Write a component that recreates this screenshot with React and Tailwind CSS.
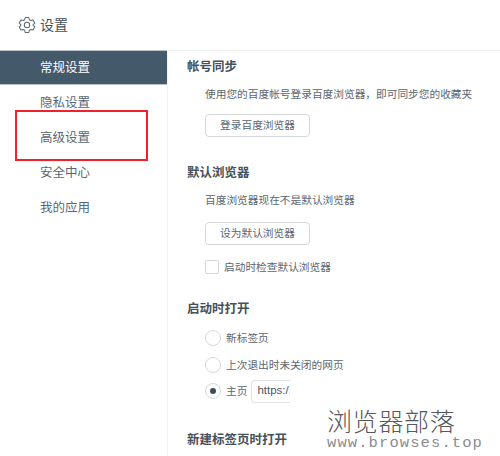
import React from "react";

const cjk = "font-['Liberation_Sans','Noto_Sans_CJK_SC',sans-serif]";

function GearIcon() {
  return (
    <svg width="18" height="18" viewBox="0 0 24 24" fill="none" stroke="#5f6b75" strokeWidth="1.4" strokeLinejoin="round">
      <path d="M9.6 2h4.8l.7 3 1.9 1.1 3-.9 2.4 4.2-2.2 2.1v1l2.2 2.1-2.4 4.2-3-.9-1.9 1.1-.7 3H9.6l-.7-3-1.9-1.1-3 .9-2.4-4.2L3.8 12.5v-1L1.6 9.4 4 5.2l3 .9L8.9 5z" />
      <circle cx="12" cy="12" r="3.6" />
    </svg>
  );
}

function SideItem({ label, active }) {
  return (
    <div
      className={
        active
          ? "h-[35px] pl-10 pt-[2px] flex items-center text-[12.5px] bg-[#44596a] text-white border-y border-[#b9c2c9]"
          : "h-[35px] pl-10 pt-[2px] flex items-center text-[12.5px] text-[#5b6670]"
      }
    >
      {label}
    </div>
  );
}

function Heading({ children, className }) {
  return <h2 className={"h-4 leading-4 text-[12.5px] font-bold text-[#46515c] " + className}>{children}</h2>;
}

function OutlineButton({ children, className }) {
  return (
    <div className={"ml-[18px] w-[105px] h-[23px] flex items-center justify-center text-[10.7px] text-[#5b6670] border border-[#d5d8da] rounded " + className}>
      {children}
    </div>
  );
}

function Radio({ checked, label, className, children }) {
  return (
    <div className={"ml-[18px] h-4 flex items-center " + className}>
      <span className="w-4 h-4 rounded-full border border-[#d5d8da] flex items-center justify-center">
        {checked && <span className="w-[6px] h-[6px] rounded-full bg-[#3d4c5a]"></span>}
      </span>
      <span className="ml-[5px] text-[10.7px] text-[#5b6670]">{label}</span>
      {children}
    </div>
  );
}

export default function App() {
  return (
    <div className={"relative w-[500px] h-[456px] overflow-hidden bg-white " + cjk}>
      <div className="h-[50px] pl-[18px] flex items-center">
        <GearIcon />
        <span className="ml-[4px] text-sm text-[#46515c]">设置</span>
      </div>
      <div className="flex h-[406px]">
        <div className="w-[168px] shrink-0 border-r border-[#f1f2f3]">
          <SideItem label="常规设置" active />
          <SideItem label="隐私设置" />
          <SideItem label="高级设置" />
          <SideItem label="安全中心" />
          <SideItem label="我的应用" />
        </div>
        <div className="flex-1 border-t border-[#eef0f1] pl-[19px] flex flex-col items-start">
          <Heading className="mt-2">帐号同步</Heading>
          <p className="ml-[18px] mt-[11px] h-4 leading-4 text-[10.7px] whitespace-nowrap text-[#5b6670]">使用您的百度帐号登录百度浏览器，即可同步您的收藏夹</p>
          <OutlineButton className="mt-3">登录百度浏览器</OutlineButton>
          <Heading className="mt-7">默认浏览器</Heading>
          <p className="ml-[18px] mt-[11px] h-4 leading-4 text-[10.7px] text-[#5b6670]">百度浏览器现在不是默认浏览器</p>
          <OutlineButton className="mt-[14px]">设为默认浏览器</OutlineButton>
          <div className="ml-[18px] mt-[15px] h-[14px] flex items-center">
            <span className="w-[14px] h-[14px] rounded-[2px] border border-[#d5d8da]"></span>
            <span className="ml-[5px] text-[10.7px] text-[#5b6670]">启动时检查默认浏览器</span>
          </div>
          <Heading className="mt-[27px]">启动时打开</Heading>
          <Radio label="新标签页" className="mt-[13px]" />
          <Radio label="上次退出时未关闭的网页" className="mt-[11px]" />
          <Radio checked label="主页" className="mt-[10px]">
            <div className="ml-[4px] w-[39px] h-[23px] pl-[5px] flex items-center overflow-hidden border border-r-0 border-[#dfe1e3] rounded-l text-[11.5px] text-[#4b5661]">
              https:/,
            </div>
          </Radio>
          <Heading className="mt-[33px]">新建标签页时打开</Heading>
        </div>
      </div>

      <div className="absolute left-[15px] top-[110px] w-[133px] h-[51px] border-2 border-[#f0202c]"></div>

      <div className="absolute left-[327px] top-[408px] text-[#55585c]">
        <div className="h-[25px] leading-[25px] text-[25px] tracking-[0.7px] font-['Noto_Sans_CJK_SC',sans-serif] font-light">浏览器部落</div>
        <div className="h-4 leading-4 mt-[2px] text-[15.5px] tracking-[1.1px] whitespace-nowrap text-[#8b8d90] font-['Liberation_Mono',monospace]">www.browses.top</div>
      </div>
    </div>
  );
}
